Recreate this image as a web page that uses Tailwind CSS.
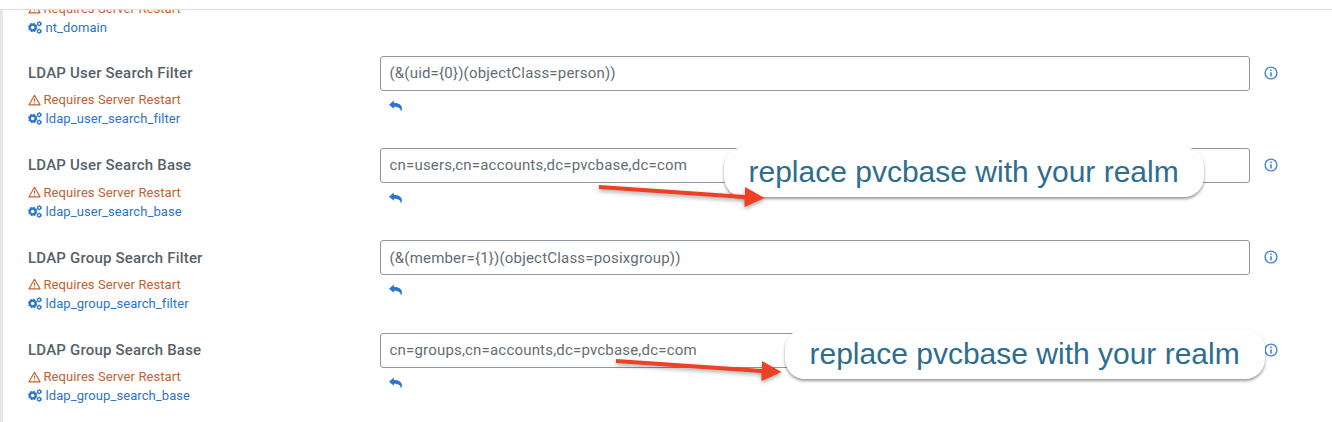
<!DOCTYPE html>
<html lang="en">
<head>
<meta charset="utf-8">
<title>LDAP settings</title>
<script src="https://cdn.jsdelivr.net/npm/@tailwindcss/browser@4"></script>
</head>
<body class="bg-white">
<svg class="hidden">
  <symbol id="warn" viewBox="0 0 13 12"><path d="M6.5 1.3 12 10.8H1Z" fill="none" stroke="currentColor" stroke-width="1.15" stroke-linejoin="round"/><path d="M6.5 4.6v3M6.5 8.5v1.1" stroke="currentColor" stroke-width="1.2"/></symbol>
  <symbol id="gears" viewBox="0 0 15 14">
    <circle cx="5" cy="7" r="3.100" fill="none" stroke="currentColor" stroke-width="2.300"/>
    <circle cx="5" cy="7" r="4.400" fill="none" stroke="currentColor" stroke-width="1.300" stroke-dasharray="1.900 1.555"/>
    <circle cx="12" cy="3" r="1.700" fill="none" stroke="currentColor" stroke-width="1.400"/>
    <circle cx="12" cy="3" r="2.500" fill="none" stroke="currentColor" stroke-width=".8" stroke-dasharray="1.300 1.300"/>
    <circle cx="12" cy="11" r="1.700" fill="none" stroke="currentColor" stroke-width="1.400"/>
    <circle cx="12" cy="11" r="2.500" fill="none" stroke="currentColor" stroke-width=".8" stroke-dasharray="1.300 1.300"/>
  </symbol>
  <symbol id="undo" viewBox="0 0 14 12"><path d="M0 4.6 5 .3V2.800C10 2.800 13.400 4.700 13.400 8.500C13.400 9.800 13 10.900 12.300 11.800C12.300 8.200 10 6.700 5 6.700V8.900Z" fill="currentColor"/></symbol>
  <symbol id="info" viewBox="0 0 14 14"><circle cx="7" cy="7" r="5.900" fill="none" stroke="currentColor" stroke-width="1.400"/><path d="M7 3.500v1.500M7 6.200v4.200" stroke="currentColor" stroke-width="1.600"/></symbol>
</svg>
<div class="relative flex h-[422px] w-[1332px] flex-col overflow-hidden font-['Roboto',sans-serif]">
  <header class="h-[10px] shrink-0 border-b border-[#dcdee1] bg-white"></header>
  <main class="min-h-0 flex-1 overflow-hidden border-l-3 border-[#e4e6ea] pl-[25px]">
    <section class="-mt-[46.3px] h-[92.3px] pt-[35px] text-[13px] leading-[19px] tracking-[0.08px]">
      <p class="flex items-center gap-[2.500px] text-[#c4602d]"><svg class="h-3 w-[13px]"><use href="#warn"/></svg><span>Requires Server Restart</span></p>
      <p class="flex items-center gap-[3.500px] text-[#2b74d0]"><svg class="h-[13px] w-[14px]"><use href="#gears"/></svg><span>nt_domain</span></p>
    </section>

    <section class="flex h-[92.200px] items-start">
      <div class="w-[351.500px] pt-[7.300px] text-[13px] leading-[19px] tracking-[0.08px]">
        <h2 class="mb-[7.200px] text-[15px] leading-5 font-medium tracking-[0.2px] text-[#566168]">LDAP User Search Filter</h2>
        <p class="flex items-center gap-[2.500px] text-[#c4602d]"><svg class="h-3 w-[13px]"><use href="#warn"/></svg><span>Requires Server Restart</span></p>
        <p class="flex items-center gap-[3.500px] text-[#2b74d0]"><svg class="h-[13px] w-[14px]"><use href="#gears"/></svg><span>ldap_user_search_filter</span></p>
      </div>
      <div class="w-[870.500px]">
        <div class="flex h-[35px] items-center rounded-[3px] border border-[#8d959e] pl-[9px] text-[15px] tracking-[0.19px] text-[#646d74]">(&amp;(uid={0})(objectClass=person))</div>
        <svg class="mt-[9px] ml-[9px] h-[12px] w-[13.500px] text-[#2b74d0]"><use href="#undo"/></svg>
      </div>
      <svg class="mt-[10px] ml-[14px] size-[14px] text-[#4287d6]"><use href="#info"/></svg>
    </section>

    <section class="flex h-[92.200px] items-start">
      <div class="w-[351.500px] pt-[7.300px] text-[13px] leading-[19px] tracking-[0.08px]">
        <h2 class="mb-[7.200px] text-[15px] leading-5 font-medium tracking-[0.2px] text-[#566168]">LDAP User Search Base</h2>
        <p class="flex items-center gap-[2.500px] text-[#c4602d]"><svg class="h-3 w-[13px]"><use href="#warn"/></svg><span>Requires Server Restart</span></p>
        <p class="flex items-center gap-[3.500px] text-[#2b74d0]"><svg class="h-[13px] w-[14px]"><use href="#gears"/></svg><span>ldap_user_search_base</span></p>
      </div>
      <div class="w-[870.500px]">
        <div class="flex h-[35px] items-center rounded-[3px] border border-[#8d959e] pl-[9px] text-[15px] tracking-[0.19px] text-[#646d74]">cn=users,cn=accounts,dc=pvcbase,dc=com</div>
        <svg class="mt-[9px] ml-[9px] h-[12px] w-[13.500px] text-[#2b74d0]"><use href="#undo"/></svg>
      </div>
      <svg class="mt-[10px] ml-[14px] size-[14px] text-[#4287d6]"><use href="#info"/></svg>
    </section>

    <section class="flex h-[92.200px] items-start">
      <div class="w-[351.500px] pt-[7.300px] text-[13px] leading-[19px] tracking-[0.08px]">
        <h2 class="mb-[7.200px] text-[15px] leading-5 font-medium tracking-[0.2px] text-[#566168]">LDAP Group Search Filter</h2>
        <p class="flex items-center gap-[2.500px] text-[#c4602d]"><svg class="h-3 w-[13px]"><use href="#warn"/></svg><span>Requires Server Restart</span></p>
        <p class="flex items-center gap-[3.500px] text-[#2b74d0]"><svg class="h-[13px] w-[14px]"><use href="#gears"/></svg><span>ldap_group_search_filter</span></p>
      </div>
      <div class="w-[870.500px]">
        <div class="flex h-[35px] items-center rounded-[3px] border border-[#8d959e] pl-[9px] text-[15px] tracking-[0.19px] text-[#646d74]">(&amp;(member={1})(objectClass=posixgroup))</div>
        <svg class="mt-[9px] ml-[9px] h-[12px] w-[13.500px] text-[#2b74d0]"><use href="#undo"/></svg>
      </div>
      <svg class="mt-[10px] ml-[14px] size-[14px] text-[#4287d6]"><use href="#info"/></svg>
    </section>

    <section class="flex h-[92.200px] items-start">
      <div class="w-[351.500px] pt-[7px] text-[13px] leading-[19px] tracking-[0.08px]">
        <h2 class="mb-[7.500px] text-[15px] leading-5 font-medium tracking-[0.2px] text-[#566168]">LDAP Group Search Base</h2>
        <p class="flex items-center gap-[2.500px] text-[#c4602d]"><svg class="h-3 w-[13px]"><use href="#warn"/></svg><span>Requires Server Restart</span></p>
        <p class="flex items-center gap-[3.500px] text-[#2b74d0]"><svg class="h-[13px] w-[14px]"><use href="#gears"/></svg><span>ldap_group_search_base</span></p>
      </div>
      <div class="w-[870.500px]">
        <div class="flex h-[35px] items-center rounded-[3px] border border-[#8d959e] pl-[9px] text-[15px] tracking-[0.19px] text-[#646d74]">cn=groups,cn=accounts,dc=pvcbase,dc=com</div>
        <svg class="mt-[9px] ml-[9px] h-[12px] w-[13.500px] text-[#2b74d0]"><use href="#undo"/></svg>
      </div>
      <svg class="mt-[10px] ml-[14px] size-[14px] text-[#4287d6]"><use href="#info"/></svg>
    </section>
  </main>

  <!-- Annotations over the form -->
  <div class="absolute top-[147px] left-[724px] flex h-[50px] w-[480px] items-center rounded-[20px] bg-white pb-px pl-[24.500px] font-['Liberation_Sans',sans-serif] text-[30px] whitespace-nowrap text-[#2d6d90] shadow-[0_2px_3px_rgba(0,0,0,0.4)]">replace pvcbase with your realm</div>
  <div class="absolute top-[329px] left-[785px] flex h-[50px] w-[480px] items-center rounded-[20px] bg-white pb-px pl-[24.500px] font-['Liberation_Sans',sans-serif] text-[30px] whitespace-nowrap text-[#2d6d90] shadow-[0_2px_3px_rgba(0,0,0,0.4)]">replace pvcbase with your realm</div>
  <svg class="absolute inset-0 h-[422px] w-[1332px] drop-shadow-[0_2px_2px_rgba(0,0,0,0.35)]" fill="#ee4023">
    <path d="M599 185 745 195V187L764.500 198 744.500 207V199L599 189Z"/>
    <path d="M616 359 762 369V361L781.500 372 761.500 381V373L616 363Z"/>
  </svg>
</div>
</body>
</html>
